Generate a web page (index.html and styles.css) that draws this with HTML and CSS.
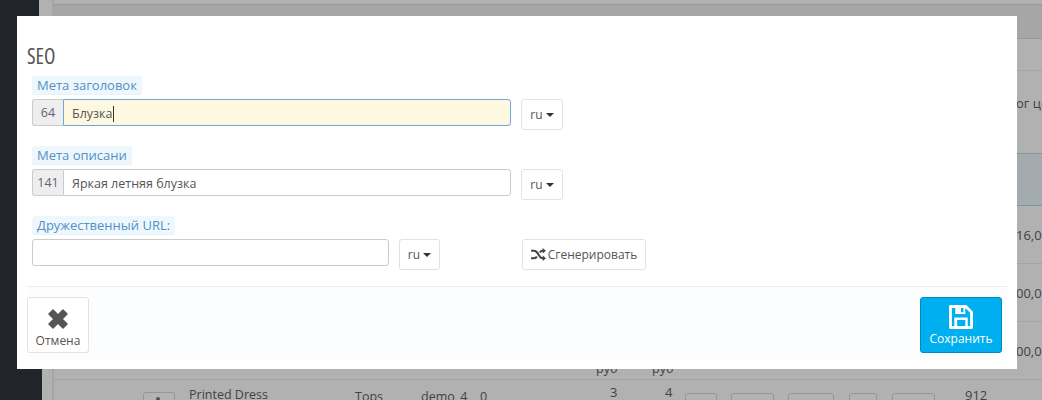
FILE: index.html
```html
<!DOCTYPE html>
<html lang="ru">
<head>
<meta charset="utf-8">
<title>SEO</title>
<link rel="stylesheet" href="styles.css">
</head>
<body>
<div class="page">
  <aside class="sidebar"></aside>
  <main class="backdrop">
    <div class="bg-panel">
      <div class="bg-row bg-r0"></div>
      <div class="bg-row bg-r1"></div>
      <div class="bg-row bg-r2"></div>
      <div class="bg-row bg-r3"><span class="bg-right bg-t1">ог це</span></div>
      <div class="bg-row bg-r4"></div>
      <div class="bg-row bg-r5"><span class="bg-right bg-t2">16,00</span></div>
      <div class="bg-row bg-r6"><span class="bg-right bg-t2">00,00</span></div>
      <div class="bg-row bg-r7">
        <span class="bg-right bg-t2">00,00</span>
        <span class="bg-cell bg-c1">руб</span><span class="bg-cell bg-c2">руб</span>
      </div>
      <div class="bg-row bg-r8">
        <span class="bg-box bg-b0"></span>
        <span class="bg-cell bg-name">Printed Dress</span>
        <span class="bg-cell bg-tops">Tops</span>
        <span class="bg-cell bg-demo">demo_4</span>
        <span class="bg-cell bg-zero">0</span>
        <span class="bg-cell bg-n3">3</span>
        <span class="bg-cell bg-n4">4</span>
        <span class="bg-box bg-b1"></span>
        <span class="bg-box bg-b2"></span>
        <span class="bg-box bg-b3"></span>
        <span class="bg-box bg-b4"></span>
        <span class="bg-box bg-b5"></span>
        <span class="bg-cell bg-912">912</span>
      </div>
    </div>
  </main>
  <section class="modal">
    <h2 class="title">SEO</h2>
    <div class="field field-first">
      <span class="label">Мета заголовок</span>
      <div class="row">
        <div class="group group-wide">
          <span class="addon">64</span>
          <div class="input input-focus">Блузка<i class="caret-line"></i></div>
        </div>
        <button class="btn btn-lang">ru <i class="caret"></i></button>
      </div>
    </div>
    <div class="field">
      <span class="label">Мета описани</span>
      <div class="row">
        <div class="group group-wide">
          <span class="addon">141</span>
          <div class="input">Яркая летняя блузка</div>
        </div>
        <button class="btn btn-lang">ru <i class="caret"></i></button>
      </div>
    </div>
    <div class="field">
      <span class="label">Дружественный URL:</span>
      <div class="row">
        <div class="input input-url"></div>
        <button class="btn btn-lang btn-lang-sm">ru <i class="caret"></i></button>
        <button class="btn btn-gen">
          <svg class="icon-random" viewBox="0 0 16 14" width="15" height="13">
            <path d="M0 3h3.200c2.800 0 3.600 2 4.800 4s2 4 4.600 4H13" fill="none" stroke="#444" stroke-width="2.200"/>
            <path d="M0 11h3.200c1.500 0 2.400-.7 3.100-1.700M9.400 4.700C10.100 3.700 11 3 12.600 3H13" fill="none" stroke="#444" stroke-width="2.200"/>
            <path d="M12.500 0l3.500 3-3.500 3zM12.500 8l3.500 3-3.500 3z" fill="#444"/>
          </svg>
          Сгенерировать
        </button>
      </div>
    </div>
    <footer class="footer">
      <button class="btn btn-big btn-cancel">
        <svg viewBox="0 0 20 20" width="20" height="20">
          <path d="M5 1l5 5 5-5 4 4-5 5 5 5-4 4-5-5-5 5-4-4 5-5-5-5z" fill="#555" stroke="#555" stroke-width="1.500" stroke-linejoin="round"/>
        </svg>
        <span>Отмена</span>
      </button>
      <button class="btn btn-big btn-save">
        <svg viewBox="0 0 25 25" width="24" height="24">
          <path fill-rule="evenodd" d="M0 1.500A1.500 1.500 0 0 1 1.500 0H18l7 7v16.500a1.500 1.500 0 0 1-1.500 1.500H1.500A1.500 1.500 0 0 1 0 23.500zM3 3v19h2.500v-9h14v9H22V8.200L17 3v6.500H6.500V3zM8.500 15.500V22h8.500v-6.500zM12.500 3v4.500h2.500V3z" fill="#fff"/>
        </svg>
        <span>Сохранить</span>
      </button>
    </footer>
  </section>
</div>
</body>
</html>
```
FILE: styles.css
```css
* { box-sizing: border-box; }
html, body { margin: 0; padding: 0; }
body {
  width: 1042px;
  height: 400px;
  overflow: hidden;
  font-family: "Open Sans", "Noto Sans", sans-serif;
  font-size: 12px;
  color: #555;
  background: #b0b0b0;
}
.page { position: relative; display: flex; width: 1042px; height: 400px; overflow: hidden; }
.sidebar { position: relative; width: 39px; flex: none; background: #212429; }
.sidebar::after {
  content: "";
  position: absolute;
  left: 39px;
  top: 369px;
  width: 3px;
  height: 31px;
  background: #212429;
}
.backdrop { flex: 1; background: #b1b1b1; padding: 0 0 0 13px; }
.bg-panel {
  height: 400px;
  border-left: 2px solid #a5a5a5;
  color: #424242;
  font-size: 12.500px;
}
.bg-row { position: relative; border-bottom: 1px solid #a4a4a4; }
.bg-r0 { height: 5px; border-bottom-color: #999; }
.bg-r1 { height: 34px; background: #a6a6a6; border-bottom-color: #989898; }
.bg-r2 { height: 32px; }
.bg-r3 { height: 83px; border-bottom-color: #7f97a5; }
.bg-r4 { height: 52px; background: #a3abae; border-bottom-color: #7f97a5; }
.bg-r5 { height: 58px; }
.bg-r6 { height: 58px; }
.bg-r7 { height: 58px; }
.bg-r8 { height: 21px; border-bottom: 0; overflow: visible; }
.bg-right { position: absolute; left: 962px; white-space: nowrap; font-size: 13px; }
.bg-t1 { top: 23px; }
.bg-t2 { top: 20px; }
.bg-cell { position: absolute; white-space: nowrap; }
.bg-c1 { left: 542px; top: 38px; }
.bg-c2 { left: 598px; top: 38px; }
.bg-name { left: 135px; top: 6px; }
.bg-tops { left: 301px; top: 8px; }
.bg-demo { left: 367px; top: 8px; }
.bg-zero { left: 426px; top: 8px; }
.bg-n3 { left: 556px; top: 3px; font-size: 13px; }
.bg-n4 { left: 611px; top: 3px; font-size: 13px; }
.bg-912 { left: 911px; top: 6px; font-size: 13px; }
.bg-box { position: absolute; top: 13px; height: 24px; border: 1px solid #969696; border-radius: 3px; background: #b3b3b3; }
.bg-b0 { left: 89px; top: 12px; width: 32px; }
.bg-b0::after {
  content: "";
  position: absolute;
  left: 12px;
  top: 4px;
  width: 4px;
  height: 5px;
  border-radius: 2px;
  background: #555;
}
.bg-b1 { left: 631px; width: 32px; }
.bg-b2 { left: 677px; width: 43px; }
.bg-b3 { left: 734px; width: 46px; }
.bg-b4 { left: 795px; width: 28px; }
.bg-b5 { left: 838px; width: 43px; }

.modal {
  position: absolute;
  left: 17px;
  top: 16px;
  width: 1000px;
  height: 353px;
  background: #fff;
  padding: 0 10px;
  display: flex;
  flex-direction: column;
}
.title {
  margin: 30px 0 0;
  height: 20px;
  line-height: 20px;
  font-size: 21px;
  font-weight: 500;
  font-stretch: 75%;
  color: #555;
}
.field { margin: 0 0 0 5px; height: 70px; flex: none; }
.field-first { margin-top: 10px; }
.label {
  display: inline-block;
  height: 19px;
  line-height: 19px;
  padding: 0 5px;
  font-size: 13px;
  color: #5290c8;
  background: #eef7fc;
  border-bottom: 1px solid #e4f2fa;
  border-radius: 3px;
  vertical-align: top;
}
.row { display: flex; align-items: flex-start; margin-top: 4px; }
.group { display: flex; height: 27px; }
.group-wide { width: 479px; margin-right: 10px; }
.addon {
  width: 31px;
  flex: none;
  line-height: 25px;
  text-align: center;
  font-size: 12.500px;
  color: #6a5f78;
  background: #eee;
  border: 1px solid #ccc;
  border-right: 0;
  border-radius: 3px 0 0 3px;
}
.input {
  flex: 1;
  height: 27px;
  line-height: 27px;
  padding: 0 8px;
  font-size: 12.500px;
  color: #555;
  background: #fff;
  border: 1px solid #ccc;
  border-radius: 0 3px 3px 0;
}
.input-focus { background: #fdf9e0; border-color: #6ea8dc; }
.input-url { flex: none; width: 357px; margin-right: 10px; border-radius: 3px; }
.caret-line { display: inline-block; width: 1px; height: 16px; background: #333; vertical-align: -4px; }
.btn {
  font-family: inherit;
  font-size: 12px;
  color: #555;
  background: #fff;
  border: 1px solid #e2e2e2;
  border-radius: 3px;
  padding: 0;
  margin: 0;
}
.btn-lang { width: 42px; height: 31px; flex: none; }
.btn-lang-sm { width: 41px; }
.caret {
  display: inline-block;
  width: 0;
  height: 0;
  border-top: 4px solid #333;
  border-left: 4px solid transparent;
  border-right: 4px solid transparent;
  vertical-align: 2px;
}
.btn-gen {
  width: 124px;
  height: 31px;
  margin-left: 82px;
  display: flex;
  align-items: center;
  justify-content: center;
  gap: 2px;
  white-space: nowrap;
}
.icon-random { flex: none; }
.footer {
  height: 73px;
  border-top: 1px solid #eee;
  background: #fcfdfe;
  display: flex;
  justify-content: space-between;
  align-items: flex-start;
  padding: 10px 5px 0 0;
  flex: none;
}
.btn-big {
  height: 56px;
  display: flex;
  flex-direction: column;
  align-items: center;
  justify-content: flex-start;
  padding-top: 7px;
  gap: 2px;
}
.btn-cancel { width: 62px; padding-top: 11px; gap: 4px; }
.btn-save { width: 82px; background: #00aff0; border-color: #008abd; color: #fff; }
.btn-big span { line-height: 15px; }
```
